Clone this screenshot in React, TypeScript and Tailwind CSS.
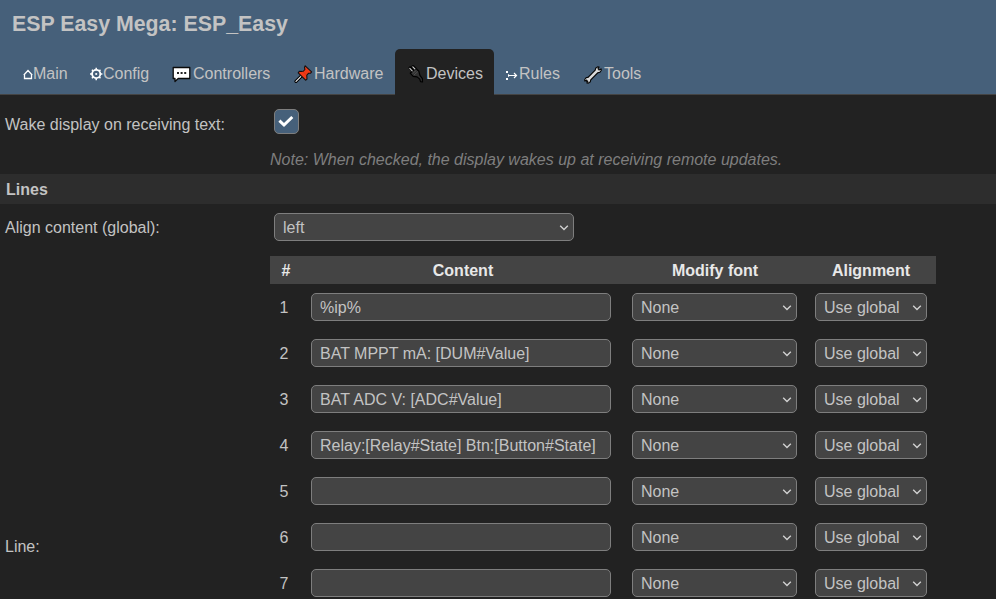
import React from "react";

const HomeIcon = () => (
  <svg className="block" width="10" height="12" viewBox="0 0 10 12" fill="none" stroke="#fff" strokeWidth="1.3">
    <path d="M1.5 6.3 5 2.5l3.5 3.8v4.2h-7zM.7 7.1l.9-.9M9.3 7.1l-.9-.9" />
  </svg>
);

const GearIcon = () => (
  <svg className="block" width="13" height="14" viewBox="0 0 13 14" fill="none" stroke="#fff">
    <circle cx="6.2" cy="7" r="4.1" strokeWidth="1.8" />
    <circle cx="6.2" cy="7" r="1.1" fill="#fff" stroke="none" />
    <path strokeWidth="1.5" d="M6.2 .8v2M6.2 11.2v2M0 7h2M10.4 7h2M1.9 2.7l1.3 1.3M9.2 10l1.3 1.3M10.5 2.7 9.2 4M3.2 10l-1.3 1.3" />
  </svg>
);

const ChatIcon = () => (
  <svg className="-mt-px block" width="20" height="18" viewBox="0 0 20 18">
    <path d="M1.2 2.5h16.6v11H6.2L3 16.5v-3H1.2z" fill="#fff" stroke="#0b0b0b" strokeWidth="1.3" strokeLinejoin="round" />
    <path d="M5 7h2v2H5zM8.6 7h2v2h-2zM12.2 7h2v2h-2z" fill="#222" />
  </svg>
);

const PinIcon = () => (
  <svg className="block" width="20" height="20" viewBox="0 0 20 20" strokeLinejoin="round" strokeLinecap="round">
    <path d="M2 17.4 8 11.4" stroke="#000" strokeWidth="3.2" />
    <path d="M2 17.4 8 11.4" stroke="#e5e5e5" strokeWidth="1.2" />
    <path d="m11.2 1.8 6.4 6.1-1.2 1.4-1.7-.1-1.9 2 .2 3.9-1.4 1.1-7.4-7.4 1.1-1.5 3.8.2 1.8-2-.4-2.2z" fill="#f03a17" stroke="#111" strokeWidth="1.1" />
    <path d="m9.2 7.8 2.8 2.8" stroke="#d93012" strokeWidth=".8" />
  </svg>
);

const PlugIcon = () => (
  <svg className="block" width="20" height="20" viewBox="0 0 20 20" strokeLinejoin="round" strokeLinecap="round">
    <path d="M6.6 6.5 4.1 3.9M9.2 4.8 7 2.5" stroke="#000" strokeWidth="3" />
    <path d="m4.2 9.2 5.4-4.9 3.3 3 1 4 2.5 3.4.1 3.2-2-.2-.7-2.6-2.7-2.2-3.9-.6z" fill="#303030" stroke="#000" strokeWidth="1.2" />
    <path d="M6.2 6.8 3.8 4.4M8.9 5 6.8 2.9" stroke="#ccc" strokeWidth="1.1" />
    <path d="m6.9 9.4 3.4-3.1M8.2 10.8l3.4-3" stroke="#555" strokeWidth=".8" />
  </svg>
);

const RulesIcon = () => (
  <svg className="mt-px block" width="13" height="12" viewBox="0 0 13 12" fill="none" stroke="#fff">
    <path d="M1 2h2v2H1zM1 9h2v2H1z" fill="#fff" stroke="none" />
    <path d="M3.2 6.5h8.3M9 4l2.5 2.5L9 9" strokeWidth="1.2" />
    <path d="M3.6 5.2v2.6" strokeWidth="1" />
  </svg>
);

const WrenchIcon = () => (
  <svg className="mt-px block" width="20" height="20" viewBox="0 0 20 20" strokeLinejoin="round" strokeLinecap="round">
    <path d="M5 15 14.5 5.5" stroke="#080808" strokeWidth="4.8" />
    <path
      d="m14.9 1.7-2.3 1.5-.4 3 1.6 1.6 3-.4 1.6-2.2-.3-1.3-2.2 1.2-1-1 1.2-2.1zM6.2 12.2l-3 .4-1.6 2.2.3 1.3 2-1.1 1 1-1 2 1.2.3 2.3-1.5.4-3z"
      fill="#dcdcdc"
      stroke="#080808"
      strokeWidth="1.1"
    />
    <path d="m5.4 14.6 8.9-8.9" stroke="#dcdcdc" strokeWidth="2.5" />
  </svg>
);

const tabs = [
  { label: "Main", icon: <HomeIcon />, item: "w-[67px]", slot: "w-[10px]" },
  { label: "Config", icon: <GearIcon />, item: "w-[82px]", slot: "w-[13px]" },
  { label: "Controllers", icon: <ChatIcon />, item: "w-[122px]", slot: "w-[21px]" },
  { label: "Hardware", icon: <PinIcon />, item: "w-[112px]", slot: "w-[20px]" },
  { label: "Devices", icon: <PlugIcon />, item: "w-[99px]", slot: "w-[20px]" },
  { label: "Rules", icon: <RulesIcon />, item: "w-[78px]", slot: "w-[14px]" },
  { label: "Tools", icon: <WrenchIcon />, item: "w-[81px]", slot: "w-[21px]" },
];

const lines = ["%ip%", "BAT MPPT mA: [DUM#Value]", "BAT ADC V: [ADC#Value]", "Relay:[Relay#State] Btn:[Button#State]", "", "", ""];

function Select({ value, width }: { value: string; width: string }) {
  return (
    <div className={`grid h-7 items-center ${width}`}>
      <select
        className="col-start-1 row-start-1 h-7 w-full appearance-none rounded-[5px] border border-[#7e7e7e] bg-[#444] pt-[2px] pl-2 text-base text-[#c3c3c3] outline-none"
        defaultValue={value}
      >
        <option>{value}</option>
      </select>
      <svg className="pointer-events-none col-start-1 row-start-1 mt-px mr-[5px] justify-self-end" width="10" height="8" viewBox="0 0 10 8" fill="none" stroke="#d0d0d0" strokeWidth="1.4">
        <path d="m1.2 1.8 3.8 3.8 3.8-3.8" />
      </svg>
    </div>
  );
}

export default function App() {
  return (
    <div className="h-[599px] w-[996px] overflow-hidden bg-[#222] font-['Liberation_Sans',Arial,sans-serif] text-base leading-6 text-[#c3c3c3]">
      <header className="flex h-[95px] flex-col border-b border-[#444] bg-[#46607a]">
        <h1 className="h-[49px] pt-[9px] pl-3 text-[21.33px] leading-[30px] font-bold">ESP Easy Mega: ESP_Easy</h1>
        <nav className="-mb-px flex h-[46px] pl-3">
          {tabs.map((tab) => (
            <a
              key={tab.label}
              className={`flex h-[46px] shrink-0 pt-[13px] pl-[11px] ${tab.item} ${tab.label === "Devices" ? "rounded-t-[5px] bg-[#222]" : ""}`}
            >
              <span className={`flex h-6 shrink-0 items-center ${tab.slot}`}>{tab.icon}</span>
              {tab.label}
            </a>
          ))}
        </nav>
      </header>

      <div className="flex h-[51px] pt-[14px]">
        <label className="w-[274px] shrink-0 pt-1 pl-[5px]">Wake display on receiving text:</label>
        <span className="flex size-[25px] items-center justify-center rounded-[5px] border border-[#7e7e7e] bg-[#46607a]">
          <svg width="17" height="15" viewBox="0 0 17 15" fill="none" stroke="#fff" strokeWidth="3">
            <path d="m1.4 6.6 4.6 4.4 8.3-8" />
          </svg>
        </span>
      </div>
      <p className="h-[28px] pt-[2px] pl-[270px] text-[#7e7e7e] italic">Note: When checked, the display wakes up at receiving remote updates.</p>
      <h2 className="h-[30px] bg-[#2d2d2d] pl-[6px] leading-8 font-bold">Lines</h2>
      <div className="flex h-[52px] pt-[9px]">
        <label className="w-[274px] shrink-0 pt-[3px] pl-[5px]">Align content (global):</label>
        <Select value="left" width="w-[300px]" />
      </div>

      <div className="flex">
        <div className="w-[270px] shrink-0 pt-[279px] pl-[5px]">Line:</div>
        <div className="w-[666px]">
          <div className="grid h-7 grid-cols-[32px_322px_182px_130px] items-center bg-[#444] pt-[2px] text-center font-bold text-[#e8e8e8]">
            <span>#</span>
            <span>Content</span>
            <span>Modify font</span>
            <span>Alignment</span>
          </div>
          {lines.map((line, i) => (
            <div key={i} className="flex h-[46px] items-center">
              <span className="w-[41px] pt-[2px] pl-[9.5px]">{i + 1}</span>
              <input
                className="mr-[21px] h-7 w-[300px] rounded-[5px] border border-[#7e7e7e] bg-[#444] px-2 pt-[2px] text-base text-[#c3c3c3] outline-none"
                defaultValue={line}
              />
              <Select value="None" width="w-[165px] mr-[18px]" />
              <Select value="Use global" width="w-[112px]" />
            </div>
          ))}
        </div>
      </div>
    </div>
  );
}
